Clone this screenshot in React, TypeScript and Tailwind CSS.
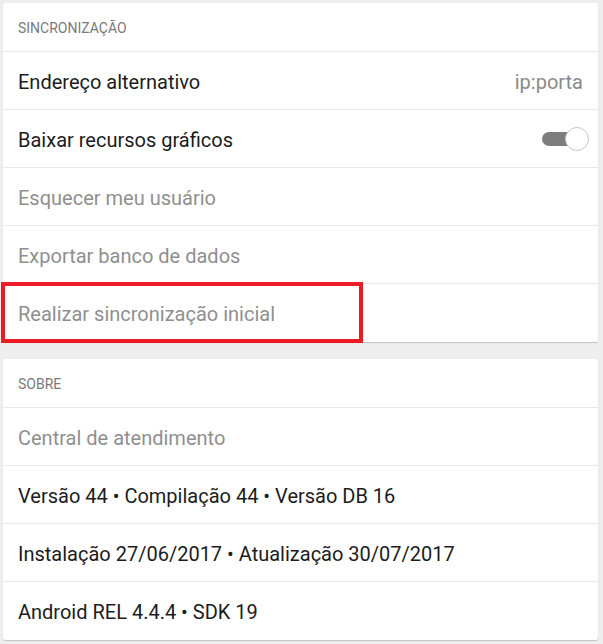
import React from "react";

const font = { fontFamily: "Roboto, 'Noto Sans', sans-serif" };

function Header({ children }: { children: React.ReactNode }) {
  return (
    <div className="h-[49px] flex items-center pl-[15px] pt-[2px] text-[14px] text-[#7a7a7a] border-b border-[#e8e8e8]">
      {children}
    </div>
  );
}

function Row({
  children,
  muted,
  last,
  right,
}: {
  children: React.ReactNode;
  muted?: boolean;
  last?: boolean;
  right?: React.ReactNode;
}) {
  return (
    <div
      className={
        "h-[58px] flex items-center justify-between pl-[15px] pr-[14px] pt-[2px] text-[20px] " +
        (muted ? "text-[#8f8f8f] " : "text-[#1c1c1c] ") +
        (last ? "" : "border-b border-[#e8e8e8]")
      }
    >
      <span>{children}</span>
      {right}
    </div>
  );
}

function Toggle() {
  return (
    <div className="relative w-[47px] h-[24px] mr-[-5px] mt-[-2px]">
      <div className="absolute left-0 top-[5px] w-[36px] h-[14px] rounded-full bg-[#7d7d7d]" />
      <div className="absolute right-0 top-0 w-[24px] h-[24px] rounded-full bg-white border border-[#c4c4c4]" />
    </div>
  );
}

export default function App() {
  return (
    <div className="w-[603px] h-[644px] bg-[#eeeeee] pl-[3px] pr-[5px] pt-[3px] overflow-hidden" style={font}>
      <div className="bg-white rounded-[2px] shadow-[0_1px_1px_rgba(0,0,0,0.18)]">
        <Header>SINCRONIZAÇÃO</Header>
        <Row right={<span className="text-[#8a8a8a] text-[20px] pr-[1px]">ip:porta</span>}>Endereço alternativo</Row>
        <Row right={<Toggle />}>Baixar recursos gráficos</Row>
        <Row muted>Esquecer meu usuário</Row>
        <Row muted>Exportar banco de dados</Row>
        <div className="relative">
          <Row muted last>
            Realizar sincronização inicial
          </Row>
          <div className="absolute left-[-2px] top-[-2px] w-[362px] h-[61px] border-[4px] border-[#ed1c24] pointer-events-none" />
        </div>
      </div>
      <div className="h-[17px]" />
      <div className="bg-white rounded-[2px] shadow-[0_1px_1px_rgba(0,0,0,0.18)]">
        <Header>SOBRE</Header>
        <Row muted>Central de atendimento</Row>
        <Row>Versão 44 • Compilação 44 • Versão DB 16</Row>
        <Row>Instalação 27/06/2017 • Atualização 30/07/2017</Row>
        <Row last>Android REL 4.4.4 • SDK 19</Row>
      </div>
    </div>
  );
}
